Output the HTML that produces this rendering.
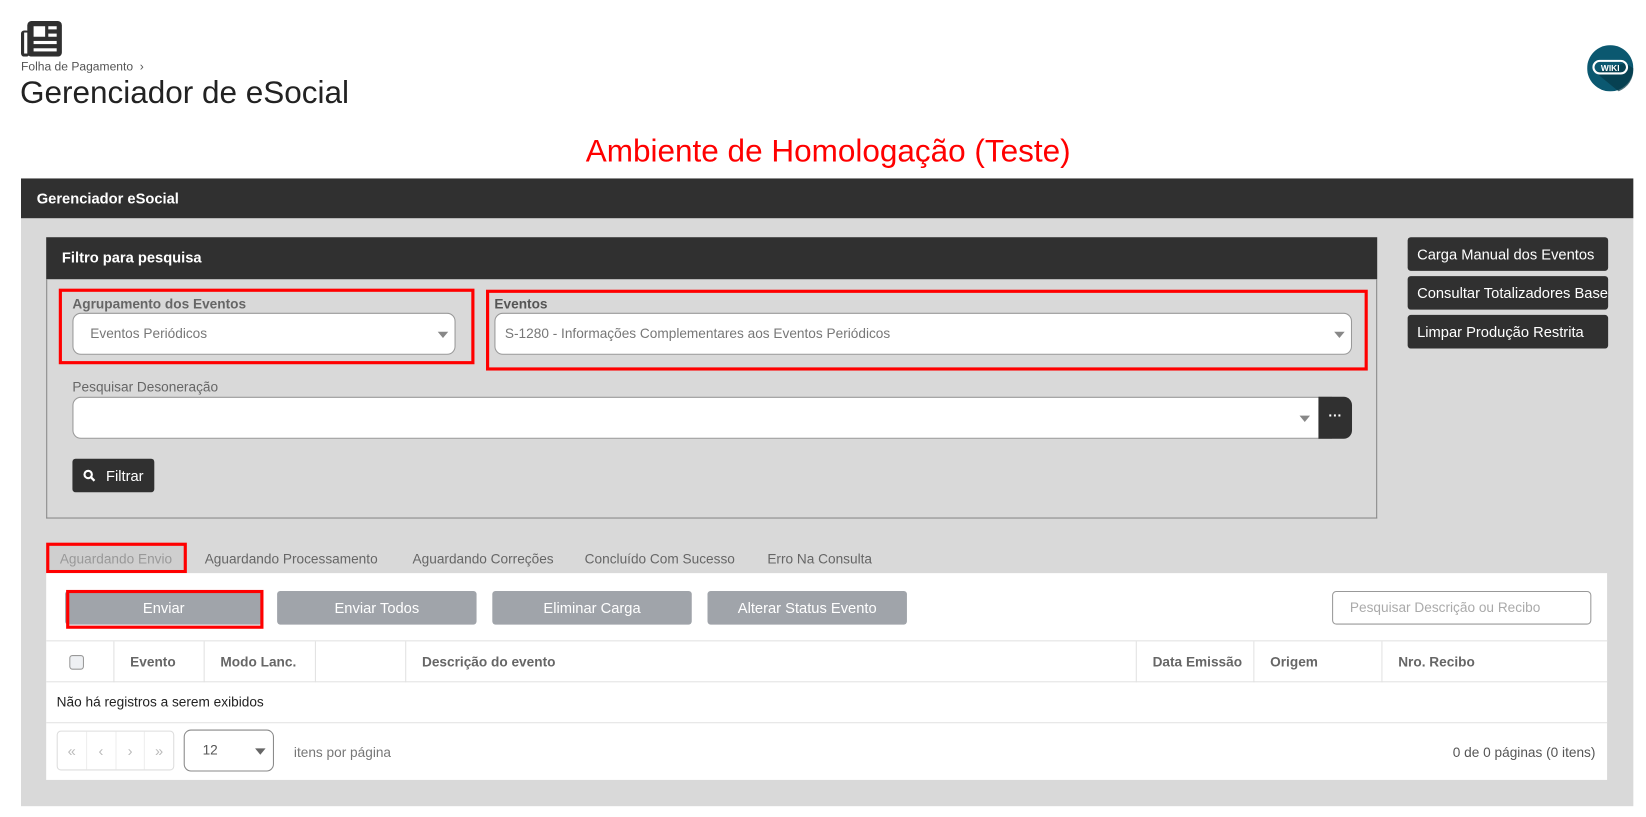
<!DOCTYPE html>
<html><head><meta charset="utf-8"><style>
html,body{margin:0;padding:0;background:#fff;overflow:hidden;width:1646px;height:816px}
#s{position:absolute;left:0;top:0;width:1568px;height:778px;transform:scale(1.0497);transform-origin:0 0;font-family:"Liberation Sans",sans-serif}
.a{position:absolute}
.dk{background:#303030;color:#fff}
.sel{background:#fff;border:1px solid #999;border-radius:8px;box-sizing:border-box}
.tri{position:absolute;width:0;height:0;border-left:5px solid transparent;border-right:5px solid transparent;border-top:6px solid #888}
.lbl{font-size:13px;color:#555}
.rb{border:3px solid #f00;box-sizing:border-box}
.gb{background:#a0a4aa;color:#fff;border-radius:3px;font-size:14px;text-align:center;line-height:32px;height:32px}
.rbtn{left:1341px;width:191px;height:32px;border-radius:3px;font-size:14px;line-height:32px;padding-left:9px;box-sizing:border-box;white-space:nowrap;overflow:visible}
.th{position:absolute;top:611px;height:39px;line-height:39px;font-size:13px;font-weight:bold;color:#666;border-left:1px solid #e2e2e2;box-sizing:border-box}
.tab{position:absolute;top:518px;font-size:13px;color:#666;line-height:30px}
</style></head><body><div id="s">
<svg class="a" style="left:20px;top:20px" width="39" height="34" viewBox="0 0 39 34"><rect x="6" y="0" width="33" height="34" rx="4" fill="#303030"/><rect x="0" y="9" width="8" height="25" rx="3" fill="#303030"/><rect x="3" y="11" width="3" height="20" fill="#fff"/><rect x="12" y="5" width="11" height="10" fill="#fff"/><rect x="26" y="5" width="8" height="3" fill="#fff"/><rect x="26" y="12" width="8" height="3" fill="#fff"/><rect x="12" y="19" width="22" height="3" fill="#fff"/><rect x="12" y="26" width="22" height="3" fill="#fff"/></svg>
<div class="a" style="left:20px;top:58px;font-size:11.5px;color:#555">Folha de Pagamento &nbsp;›</div>
<div class="a" style="left:19px;top:72px;font-size:30px;color:#222">Gerenciador de eSocial</div>
<svg class="a" style="left:1512px;top:43px" width="44" height="44" viewBox="0 0 44 44"><circle cx="22" cy="22" r="22" fill="#0b5870"/><path d="M8 26 L30 44 A22 22 0 0 0 44 22 L36 17 Z" fill="#063746" opacity=".7"/><rect x="6" y="15" width="32" height="12" rx="6" fill="none" stroke="#fff" stroke-width="2"/><text x="22" y="24.5" font-size="8" font-weight="bold" fill="#fff" text-anchor="middle" font-family="Liberation Sans">WIKI</text></svg>
<div class="a" style="left:0;width:1578px;top:128px;text-align:center;font-size:30px;color:#f00">Ambiente de Homologação (Teste)</div>
<div class="a dk" style="left:20px;top:170px;width:1536px;height:38px;line-height:38px;font-size:14px;font-weight:bold;padding-left:15px;box-sizing:border-box">Gerenciador eSocial</div>
<div class="a" style="left:20px;top:208px;width:1536px;height:560px;background:#d9d9d9"></div>
<div class="a dk" style="left:44px;top:226px;width:1268px;height:40px;line-height:38px;font-size:14px;font-weight:bold;padding-left:15px;box-sizing:border-box">Filtro para pesquisa</div>
<div class="a" style="left:44px;top:266px;width:1268px;height:228px;border:1px solid #888;border-top:none;box-sizing:border-box"></div>
<div class="a rb" style="left:56px;top:275px;width:396px;height:72px"></div>
<div class="a lbl" style="left:69px;top:282px;font-weight:bold;color:#666">Agrupamento dos Eventos</div>
<div class="a sel" style="left:69px;top:298px;width:365px;height:40px;line-height:38px;padding-left:16px;font-size:13px;color:#777">Eventos Periódicos<div class="tri" style="right:6px;top:17px"></div></div>
<div class="a rb" style="left:463px;top:276px;width:840px;height:77px"></div>
<div class="a lbl" style="left:471px;top:282px;font-weight:bold;color:#555">Eventos</div>
<div class="a sel" style="left:471px;top:298px;width:817px;height:40px;line-height:38px;padding-left:9px;font-size:13px;color:#777">S-1280 - Informações Complementares aos Eventos Periódicos<div class="tri" style="right:6px;top:17px"></div></div>
<div class="a lbl" style="left:69px;top:361px;color:#666">Pesquisar Desoneração</div>
<div class="a sel" style="left:69px;top:378px;width:1200px;height:40px;border-radius:8px 0 0 8px"><div class="tri" style="right:20px;top:17px"></div></div>
<div class="a dk" style="left:1256px;top:378px;width:32px;height:40px;border-radius:0 8px 8px 0;text-align:center;line-height:36px;font-size:13px;font-weight:bold">···</div>
<div class="a dk" style="left:69px;top:437px;width:78px;height:32px;border-radius:3px;font-size:14px;line-height:32px"><svg style="position:absolute;left:10px;top:10px" width="12" height="12" viewBox="0 0 12 12"><circle cx="5" cy="5" r="3.5" fill="none" stroke="#fff" stroke-width="2"/><path d="M7.5 7.5 L11 11" stroke="#fff" stroke-width="2.2"/></svg><span style="position:absolute;left:32px">Filtrar</span></div>
<div class="a dk rbtn" style="top:226px">Carga Manual dos Eventos</div>
<div class="a dk rbtn" style="top:263px">Consultar Totalizadores Base</div>
<div class="a dk rbtn" style="top:300px">Limpar Produção Restrita</div>
<div class="a" style="left:44px;top:517px;width:133px;height:29px;background:#cfcfcf"></div>
<div class="tab" style="left:57px;color:#999">Aguardando Envio</div>
<div class="a rb" style="left:44px;top:517px;width:134px;height:29px"></div>
<div class="tab" style="left:195px">Aguardando Processamento</div>
<div class="tab" style="left:393px">Aguardando Correções</div>
<div class="tab" style="left:557px">Concluído Com Sucesso</div>
<div class="tab" style="left:731px">Erro Na Consulta</div>
<div class="a" style="left:44px;top:546px;width:1487px;height:197px;background:#fff"></div>
<div class="a gb" style="left:62px;top:563px;width:188px">Enviar</div>
<div class="a rb" style="left:63px;top:562px;width:188px;height:37px"></div>
<div class="a gb" style="left:264px;top:563px;width:190px">Enviar Todos</div>
<div class="a gb" style="left:469px;top:563px;width:190px">Eliminar Carga</div>
<div class="a gb" style="left:674px;top:563px;width:190px">Alterar Status Evento</div>
<div class="a" style="left:1269px;top:563px;width:247px;height:32px;border:1px solid #999;border-radius:4px;box-sizing:border-box;font-size:13px;color:#aaa;line-height:30px;padding-left:16px">Pesquisar Descrição ou Recibo</div>
<div class="a" style="left:44px;top:610px;width:1487px;height:40px;border-top:1px solid #e2e2e2;border-bottom:1px solid #e2e2e2;box-sizing:border-box"></div>
<div class="a" style="left:66px;top:624px;width:12px;height:12px;border:1px solid #999;border-radius:3px;background:#eef0f3"></div>
<div class="th" style="left:108px;width:86px;padding-left:15px">Evento</div>
<div class="th" style="left:194px;width:106px;padding-left:15px">Modo Lanc.</div>
<div class="th" style="left:300px;width:86px"></div>
<div class="th" style="left:386px;width:696px;padding-left:15px">Descrição do evento</div>
<div class="th" style="left:1082px;width:112px;padding-left:15px">Data Emissão</div>
<div class="th" style="left:1194px;width:122px;padding-left:15px">Origem</div>
<div class="th" style="left:1316px;width:215px;padding-left:15px">Nro. Recibo</div>
<div class="a" style="left:54px;top:661px;font-size:13px;color:#222">Não há registros a serem exibidos</div>
<div class="a" style="left:44px;top:688px;width:1487px;border-top:1px solid #e2e2e2"></div>
<div class="a" style="left:54px;top:696px;width:112px;height:38px;border:1px solid #ddd;border-radius:4px;box-sizing:border-box;display:flex;color:#bbb;font-size:14px">
<span style="flex:1;text-align:center;line-height:36px;border-right:1px solid #eee">«</span><span style="flex:1;text-align:center;line-height:36px;border-right:1px solid #eee">‹</span><span style="flex:1;text-align:center;line-height:36px;border-right:1px solid #eee">›</span><span style="flex:1;text-align:center;line-height:36px">»</span></div>
<div class="a" style="left:175px;top:695px;width:86px;height:40px;border:1px solid #888;border-radius:7px;box-sizing:border-box;font-size:13px;color:#555;line-height:38px;padding-left:17px">12<div class="tri" style="right:7px;top:17px;border-top-color:#666"></div></div>
<div class="a" style="left:280px;top:709px;font-size:13px;color:#777">itens por página</div>
<div class="a" style="left:1384px;top:709px;font-size:13px;color:#555">0 de 0 páginas (0 itens)</div>
</div></body></html>
